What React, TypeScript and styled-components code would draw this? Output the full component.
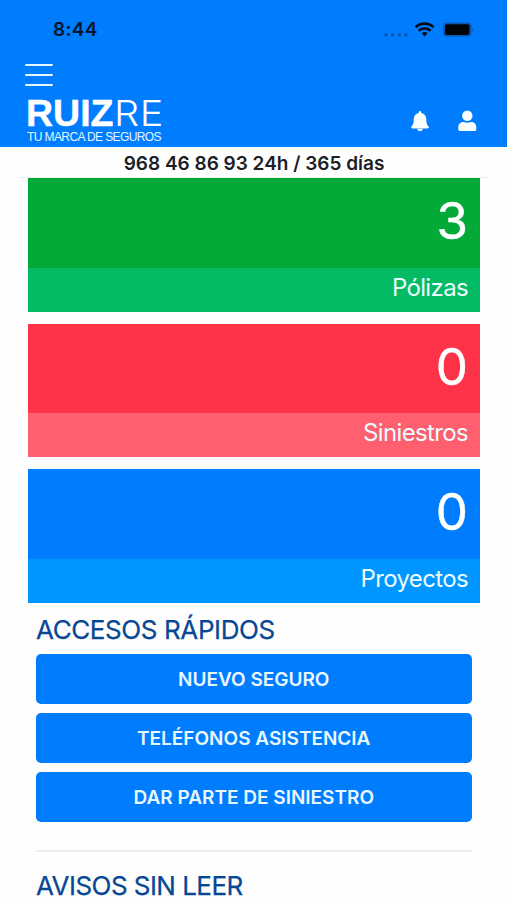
import React from "react";
import styled, { createGlobalStyle } from "styled-components";

const GlobalStyle = createGlobalStyle`
  *, *::before, *::after { box-sizing: border-box; }
  body { margin: 0; background: #fefefe; font-family: Inter, sans-serif; }
`;

const Screen = styled.div`
  width: 507px;
  height: 900px;
  overflow: hidden;
  display: flex;
  flex-direction: column;
`;

const Header = styled.header`
  height: 147px;
  flex: none;
  background: #007dff;
  display: flex;
  flex-direction: column;
`;

const StatusBar = styled.div`
  height: 60px;
  padding: 0 33px 0 53px;
  display: flex;
  justify-content: space-between;
  align-items: center;
`;

const Clock = styled.span`
  color: #05152b;
  font-size: 19px;
  font-weight: 600;
  line-height: 24px;
  letter-spacing: 0.3px;
`;

const StatusIcons = styled.svg`
  width: 92px;
  height: 24px;
  display: block;
`;

const NavBar = styled.div`
  flex: 1;
  padding: 4px 30px 0 25px;
  display: flex;
  justify-content: space-between;
`;

const Brand = styled.div`
  display: flex;
  flex-direction: column;
  align-items: flex-start;
`;

const MenuButton = styled.button`
  width: 28px;
  height: 22px;
  padding: 0;
  border: 0;
  background: none;
  display: flex;
  flex-direction: column;
  justify-content: space-between;
`;

const MenuLine = styled.span`
  height: 2px;
  width: 28px;
  border-radius: 1px;
  background: #e6f7ff;
`;

const Wordmark = styled.div`
  margin: 10px 0 0 1px;
  height: 34px;
  display: flex;
  color: #fff;
  line-height: 34px;
  white-space: nowrap;
`;

const WordBold = styled.span`
  font-family: "Liberation Sans", sans-serif;
  font-weight: 700;
  font-size: 37.5px;
  letter-spacing: 0;
  -webkit-text-stroke: 0.4px #fff;
`;

const WordLight = styled.span`
  font-weight: 300;
  font-size: 36px;
  letter-spacing: 0.6px;
  transform: scaleX(1.1);
  transform-origin: 0 50%;
`;

const Tagline = styled.div`
  margin: 0.5px 0 0 2px;
  font: 12px/13px "Liberation Sans", sans-serif;
  letter-spacing: -0.6px;
  color: #e6f7ff;
  white-space: nowrap;
`;

const Actions = styled.div`
  padding-top: 46px;
  display: flex;
  align-items: flex-start;
  gap: 27px;
`;

const ActionIcon = styled.svg`
  width: 20px;
  height: 22px;
  fill: #fafeff;
  display: block;
`;

const PhoneBar = styled.div`
  flex: none;
  height: 31px;
  margin: 0 18px 0 19px;
  border-bottom: 1px solid #e9ecef;
  text-align: center;
  font-size: 19px;
  font-weight: 600;
  line-height: 34px;
  color: #1c2025;
  white-space: nowrap;
`;

const Cards = styled.section`
  flex: none;
  margin: 0 27px 0 28px;
  display: flex;
  flex-direction: column;
  gap: 12px;
`;

const Card = styled.div<{ $color: string }>`
  height: 133.5px;
  display: flex;
  flex-direction: column;
  background: ${(p) => p.$color};
  color: #fff;
  text-align: right;
`;

const Count = styled.div`
  height: 89.7px;
  padding-right: 12px;
  font-size: 51px;
  line-height: 86px;
  -webkit-text-stroke: 0.5px #fff;
`;

const CardLabel = styled.div<{ $color: string }>`
  flex: 1;
  padding-right: 12px;
  background: ${(p) => p.$color};
  font-size: 24px;
  line-height: 40px;
  letter-spacing: -0.65px;
  color: #ecfcff;
`;

const Content = styled.main`
  margin: 9px 35.5px 0 36px;
  display: flex;
  flex-direction: column;
`;

const Heading = styled.h2<{ $spacing: number }>`
  margin: 0;
  height: 36px;
  font-size: 26px;
  font-weight: 400;
  line-height: 36px;
  letter-spacing: ${(p) => p.$spacing}px;
  color: #074794;
  -webkit-text-stroke: 0.25px #074794;
  white-space: nowrap;
`;

const Buttons = styled.div`
  margin-top: 6px;
  display: flex;
  flex-direction: column;
  gap: 9px;
`;

const ActionButton = styled.button`
  height: 50px;
  padding: 2px 0 0;
  border: 0;
  border-radius: 5px;
  background: #007dff;
  color: #e9f8ff;
  font: 600 19px/48px Inter, sans-serif;
`;

const Divider = styled.hr`
  width: 100%;
  height: 2px;
  margin: 28px 0 16px;
  border: 0;
  background: #ededef;
`;

const cards = [
  { count: 3, label: "Pólizas", color: "#04aa38", foot: "#02bb64" },
  { count: 0, label: "Siniestros", color: "#ff3348", foot: "#ff5f6e" },
  { count: 0, label: "Proyectos", color: "#007dff", foot: "#0096ff" },
];

const actions = ["NUEVO SEGURO", "TELÉFONOS ASISTENCIA", "DAR PARTE DE SINIESTRO"];

export default function App() {
  return (
    <>
      <GlobalStyle />
      <Screen>
        <Header>
          <StatusBar>
            <Clock>8:44</Clock>
            <StatusIcons viewBox="0 0 92 24">
              <g fill="#0759b3">
                <circle cx="4" cy="16.8" r="1.9" />
                <circle cx="10.6" cy="16.8" r="1.9" />
                <circle cx="17.2" cy="16.8" r="1.9" />
                <circle cx="23.8" cy="16.8" r="1.9" />
              </g>
              <g fill="none" stroke="#020d1c" strokeWidth="2.7">
                <path d="M33.6 9.2a13 13 0 0 1 18 0" />
                <path d="M36.7 12.8a8.6 8.6 0 0 1 11.8 0" />
              </g>
              <path d="M42.6 18.4l-3-3.2a4.6 4.6 0 0 1 6 0z" fill="#020d1c" />
              <rect x="61" y="4.5" width="28.5" height="14" rx="3.6" fill="#0759b3" />
              <rect x="63" y="6.3" width="24.4" height="10.6" rx="1.8" fill="#000408" />
              <path d="M90.2 9.8q2 1.8 0 3.8z" fill="#0759b3" />
            </StatusIcons>
          </StatusBar>
          <NavBar>
            <Brand>
              <MenuButton aria-label="Menú">
                <MenuLine />
                <MenuLine />
                <MenuLine />
              </MenuButton>
              <Wordmark>
                <WordBold>RUIZ</WordBold>
                <WordLight>RE</WordLight>
              </Wordmark>
              <Tagline>TU MARCA DE SEGUROS</Tagline>
            </Brand>
            <Actions>
              <ActionIcon viewBox="0 0 20 22">
                <path d="M10 1c.8 0 1.3.6 1.3 1.3v.6c3 .6 5 3 5 6 0 4.3.8 6 2.1 7.3.4.4.5.7.5 1 0 .7-.4 1.2-1.2 1.2H2.3c-.8 0-1.2-.5-1.2-1.2 0-.3.1-.6.5-1 1.3-1.3 2.1-3 2.1-7.3 0-3 2-5.4 5-6v-.6C8.700 1.600 9.200 1 10 1z" />
                <path d="M7.400 18.700h5.200a2.600 2.400 0 0 1-5.200 0z" />
              </ActionIcon>
              <ActionIcon viewBox="0 0 20 22">
                <circle cx="10.300" cy="5.800" r="5.200" />
                <path d="M6.200 11.900h.5c2.300 1 4.900 1 7.200 0h.5c2.800 0 4.900 2.200 4.900 5v2.300c0 1.100-.8 1.900-1.900 1.900H3.200c-1.100 0-1.900-.8-1.900-1.900v-2.300c0-2.800 2.100-5 4.900-5z" />
              </ActionIcon>
            </Actions>
          </NavBar>
        </Header>
        <PhoneBar>968 46 86 93 24h / 365 días</PhoneBar>
        <Cards>
          {cards.map((c) => (
            <Card key={c.label} $color={c.color}>
              <Count>{c.count}</Count>
              <CardLabel $color={c.foot}>{c.label}</CardLabel>
            </Card>
          ))}
        </Cards>
        <Content>
          <Heading $spacing={-0.4}>ACCESOS RÁPIDOS</Heading>
          <Buttons>
            {actions.map((label) => (
              <ActionButton key={label}>{label}</ActionButton>
            ))}
          </Buttons>
          <Divider />
          <Heading $spacing={-0.55}>AVISOS SIN LEER</Heading>
        </Content>
      </Screen>
    </>
  );
}
